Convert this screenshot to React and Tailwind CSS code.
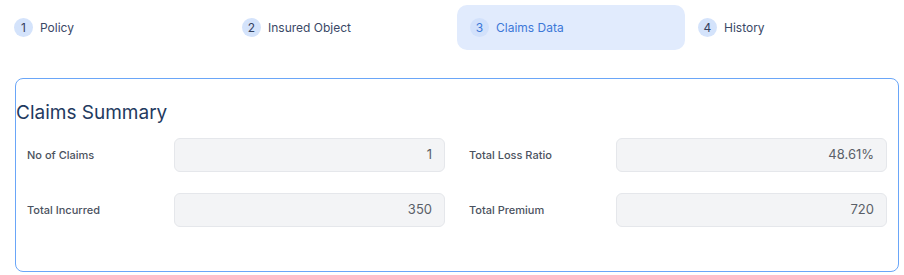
import React from 'react';

const steps = [
  { n: 1, label: 'Policy' },
  { n: 2, label: 'Insured Object' },
  { n: 3, label: 'Claims Data', active: true },
  { n: 4, label: 'History' },
];

const fields = [
  { label: 'No of Claims', value: '1' },
  { label: 'Total Loss Ratio', value: '48.61%' },
  { label: 'Total Incurred', value: '350' },
  { label: 'Total Premium', value: '720' },
];

const Step = ({ n, label, active }) => (
  <div
    className={`w-[228px] h-[45px] shrink-0 flex items-center gap-[7px] px-[13px] rounded-[10px] ${
      active ? 'bg-[#e1ebfd]' : ''
    }`}
  >
    <span
      className={`w-[19px] h-[19px] rounded-full flex items-center justify-center text-[12px] ${
        active ? 'bg-[#d2e1fb] text-[#3d78d8]' : 'bg-[#d4e3fb] text-[#34425f]'
      }`}
    >
      {n}
    </span>
    <span className={`text-[12px] ${active ? 'text-[#3d78d8]' : 'text-[#3a4866]'}`}>{label}</span>
  </div>
);

const Field = ({ label, value }) => (
  <div className="flex items-center">
    <div className="w-[147px] shrink-0 text-[11px] font-medium text-[#4b5260]">{label}</div>
    <div className="flex-1 h-[34px] flex items-center justify-end px-[12px] bg-[#f3f4f6] border border-[#e5e7eb] rounded-[6px] text-[13px] text-[#5a5f68]">
      {value}
    </div>
  </div>
);

export default function App() {
  return (
    <div className="w-[904px] h-[275px] bg-white overflow-hidden" style={{ fontFamily: 'Inter, "Noto Sans", sans-serif' }}>
      {/* 步骤条 */}
      <div className="flex pt-[5px] pl-[1px]">
        {steps.map((s) => (
          <Step key={s.n} {...s} />
        ))}
      </div>

      {/* 理赔汇总 */}
      <div className="ml-[15px] mt-[28px] w-[884px] h-[194px] border border-[#6aa6f8] rounded-[8px] pt-[20px]">
        <h2 className="text-[19px] leading-[27px] text-[#1f3a60]">Claims Summary</h2>
        <div className="grid grid-cols-2 gap-x-[24px] gap-y-[21px] px-[11px] mt-[12px]">
          {fields.map((f) => (
            <Field key={f.label} {...f} />
          ))}
        </div>
      </div>
    </div>
  );
}
